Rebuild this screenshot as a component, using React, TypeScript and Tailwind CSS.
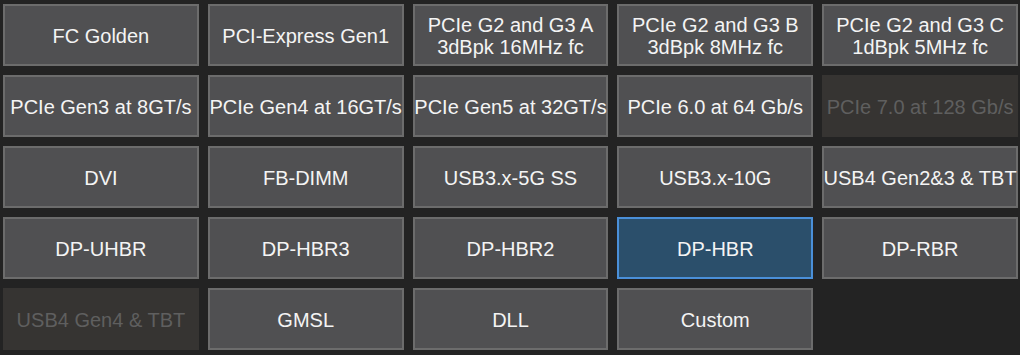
import React from "react";

type Item = { label: string[]; state?: "normal" | "disabled" | "selected" };

const items: (Item | null)[] = [
  { label: ["FC Golden"] },
  { label: ["PCI-Express Gen1"] },
  { label: ["PCIe G2 and G3 A", "3dBpk 16MHz fc"] },
  { label: ["PCIe G2 and G3 B", "3dBpk 8MHz fc"] },
  { label: ["PCIe G2 and G3 C", "1dBpk 5MHz fc"] },
  { label: ["PCIe Gen3 at 8GT/s"] },
  { label: ["PCIe Gen4 at 16GT/s"] },
  { label: ["PCIe Gen5 at 32GT/s"] },
  { label: ["PCIe 6.0 at 64 Gb/s"] },
  { label: ["PCIe 7.0 at 128 Gb/s"], state: "disabled" },
  { label: ["DVI"] },
  { label: ["FB-DIMM"] },
  { label: ["USB3.x-5G SS"] },
  { label: ["USB3.x-10G"] },
  { label: ["USB4 Gen2&3 & TBT"] },
  { label: ["DP-UHBR"] },
  { label: ["DP-HBR3"] },
  { label: ["DP-HBR2"] },
  { label: ["DP-HBR"], state: "selected" },
  { label: ["DP-RBR"] },
  { label: ["USB4 Gen4 & TBT"], state: "disabled" },
  { label: ["GMSL"] },
  { label: ["DLL"] },
  { label: ["Custom"] },
  null,
];

export default function App() {
  return (
    <div className="w-[1020px] h-[355px] bg-[#232323] pl-[3px] pr-[2px] pt-[4px] overflow-hidden font-['Liberation_Sans',Arial,sans-serif]">
      <div className="grid grid-cols-5 grid-rows-[repeat(5,62px)] gap-x-[9px] gap-y-[9px]">
        {items.map((it, i) => {
          if (!it) return <div key={i} />;
          const s = it.state ?? "normal";
          const cls =
            s === "disabled"
              ? "bg-[#363432] border-[#363432] text-[#5f5f5f]"
              : s === "selected"
              ? "bg-[#2b4f6b] border-[#4a8fd8] text-[#f4f4f4]"
              : "bg-[#505052] border-[#6c6c6c] text-[#f4f4f4]";
          return (
            <div
              key={i}
              className={`border-2 flex flex-col items-center justify-center pt-[1px] text-[20px] leading-[22px] whitespace-nowrap ${cls}`}
            >
              {it.label.map((l, j) => (
                <span key={j}>{l}</span>
              ))}
            </div>
          );
        })}
      </div>
    </div>
  );
}
